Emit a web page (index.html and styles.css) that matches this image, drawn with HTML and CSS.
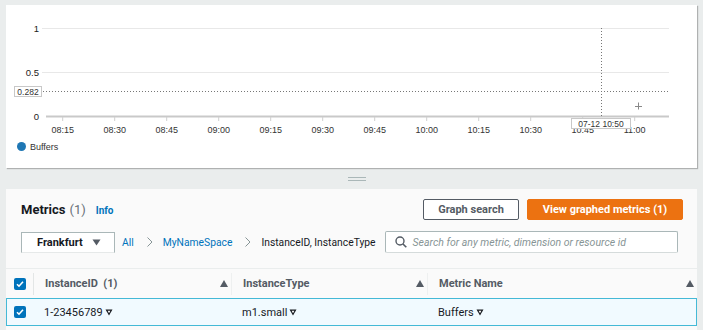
FILE: index.html
```html
<!DOCTYPE html>
<html lang="en">

<head>
    <meta charset="UTF-8">
    <meta name="viewport" content="width=device-width, initial-scale=1.0">
    <title>Metrics</title>
    <link rel="stylesheet" href="styles.css">
</head>

<body>
    <div class="graph-panel">
        <svg class="chart" width="691" height="163" viewBox="6 5 691 163">
            <!-- grid -->
            <line class="grid" x1="42" y1="28.5" x2="669" y2="28.5" />
            <line class="grid" x1="42" y1="72.5" x2="669" y2="72.5" />
            <line class="axis" x1="46" y1="116.5" x2="669" y2="116.5" />
            <text class="ylab" x="39" y="31.5">1</text>
            <text class="ylab" x="39" y="75.5">0.5</text>
            <text class="ylab" x="39" y="119.5">0</text>

            <g class="ticks">
                <line x1="62.7" y1="117" x2="62.7" y2="121" />
                <line x1="114.7" y1="117" x2="114.7" y2="121" />
                <line x1="166.7" y1="117" x2="166.7" y2="121" />
                <line x1="218.7" y1="117" x2="218.7" y2="121" />
                <line x1="270.7" y1="117" x2="270.7" y2="121" />
                <line x1="322.7" y1="117" x2="322.7" y2="121" />
                <line x1="374.7" y1="117" x2="374.7" y2="121" />
                <line x1="426.7" y1="117" x2="426.7" y2="121" />
                <line x1="478.7" y1="117" x2="478.7" y2="121" />
                <line x1="530.7" y1="117" x2="530.7" y2="121" />
                <line x1="582.7" y1="117" x2="582.7" y2="121" />
                <line x1="634.7" y1="117" x2="634.7" y2="121" />
            </g>
            <g class="xlab">
                <text x="62.7" y="132.5">08:15</text>
                <text x="114.7" y="132.5">08:30</text>
                <text x="166.7" y="132.5">08:45</text>
                <text x="218.7" y="132.5">09:00</text>
                <text x="270.7" y="132.5">09:15</text>
                <text x="322.7" y="132.5">09:30</text>
                <text x="374.7" y="132.5">09:45</text>
                <text x="426.7" y="132.5">10:00</text>
                <text x="478.7" y="132.5">10:15</text>
                <text x="530.7" y="132.5">10:30</text>
                <text x="582.7" y="132.5">10:45</text>
                <text x="634.7" y="132.5">11:00</text>
            </g>

            <!-- hover guides -->
            <line class="guide" x1="43" y1="91.5" x2="669" y2="91.5" />
            <line class="guide" x1="601.5" y1="28" x2="601.5" y2="116" />
            <rect class="tip" x="14.5" y="86.5" width="27" height="10" />
            <text class="tiptext" x="28" y="94.5">0.282</text>
            <rect class="tip" x="571.5" y="118.5" width="59" height="10" />
            <text class="tiptext" x="601" y="126.5">07-12 10:50</text>
            <g class="cross">
                <line x1="638.5" y1="102.5" x2="638.5" y2="109.5" />
                <line x1="635" y1="106.5" x2="642" y2="106.5" />
            </g>

            <!-- legend -->
            <circle cx="21.5" cy="146.5" r="4.5" fill="#1f77b4" />
            <text class="legend" x="30" y="150">Buffers</text>
        </svg>
    </div>

    <div class="splitter"><span class="handle"></span></div>

    <div class="metrics-panel">
        <div class="panel-header">
            <h2 class="title">Metrics <span class="count">(1)</span><a class="info" href="#">Info</a></h2>
            <div class="actions">
                <button class="btn">Graph search</button>
                <button class="btn btn-primary">View graphed metrics (1)</button>
            </div>
        </div>

        <div class="filter-bar">
            <div class="region-select">
                Frankfurt
                <svg width="9" height="7" viewBox="0 0 9 7"><path d="M0.5 0.5h8l-4 6z" fill="#545b64" /></svg>
            </div>
            <nav class="crumbs">
                <a href="#">All</a>
                <svg class="chev" width="6" height="10" viewBox="0 0 6 10"><path d="M0.5 0.5l4.5 4.5-4.5 4.5" fill="none" stroke="#879596" stroke-width="1" /></svg>
                <a href="#">MyNameSpace</a>
                <svg class="chev" width="6" height="10" viewBox="0 0 6 10"><path d="M0.5 0.5l4.5 4.5-4.5 4.5" fill="none" stroke="#879596" stroke-width="1" /></svg>
                <span class="current">InstanceID, InstanceType</span>
            </nav>
            <div class="search">
                <svg width="12" height="12" viewBox="0 0 12 12"><circle cx="5" cy="5" r="4" fill="none" stroke="#545b64" stroke-width="1.4" /><path d="M8 8l3.3 3.3" stroke="#545b64" stroke-width="1.6" /></svg>
                <span class="placeholder">Search for any metric, dimension or resource id</span>
            </div>
        </div>

        <div class="table">
            <div class="row head">
                <div class="cell check-cell"><span class="checkbox"><svg width="12" height="12" viewBox="0 0 12 12"><path d="M3 6.2l2 2 4-4.5" fill="none" stroke="#fff" stroke-width="1.6" /></svg></span></div>
                <div class="cell">InstanceID&nbsp;&nbsp;(1)<span class="sort"></span></div>
                <div class="cell">InstanceType<span class="sort"></span></div>
                <div class="cell last">Metric Name<span class="sort"></span></div>
            </div>
            <div class="row selected">
                <div class="cell check-cell"><span class="checkbox"><svg width="12" height="12" viewBox="0 0 12 12"><path d="M3 6.2l2 2 4-4.5" fill="none" stroke="#fff" stroke-width="1.6" /></svg></span></div>
                <div class="cell">1-23456789<svg class="caret" width="8" height="7" viewBox="0 0 8 7"><path d="M0.5 0.5h7l-3.5 6z" fill="#16191f" /><path d="M2.6 1.8h2.8l-1.4 2.4z" fill="#fff" /></svg></div>
                <div class="cell">m1.small<svg class="caret" width="8" height="7" viewBox="0 0 8 7"><path d="M0.5 0.5h7l-3.5 6z" fill="#16191f" /><path d="M2.6 1.8h2.8l-1.4 2.4z" fill="#fff" /></svg></div>
                <div class="cell">Buffers<svg class="caret" width="8" height="7" viewBox="0 0 8 7"><path d="M0.5 0.5h7l-3.5 6z" fill="#16191f" /><path d="M2.6 1.8h2.8l-1.4 2.4z" fill="#fff" /></svg></div>
            </div>
        </div>
    </div>
</body>

</html>
```

FILE: styles.css
```css
body {
    font-family: Roboto, "Liberation Sans", sans-serif;
    background-color: #eaeded;
    margin: 0;
    padding: 5px 6px 0 6px;
    color: #16191f;
}

/* graph */

.graph-panel {
    width: 691px;
    height: 163px;
    background-color: #fff;
    box-shadow: 1px 1px 1px rgba(0, 0, 0, 0.25);
}

.chart {
    display: block;
    font-family: "Liberation Sans", Arial, sans-serif;
}

.chart .grid {
    stroke: #e8e8e8;
    stroke-width: 1;
}

.chart .axis {
    stroke: #c9c9c9;
    stroke-width: 2;
}

.chart .ticks line {
    stroke: #cfcfcf;
    stroke-width: 1;
}

.chart .ylab {
    font-size: 9.5px;
    fill: #222;
    text-anchor: end;
}

.chart .xlab text {
    font-size: 9px;
    fill: #333;
    text-anchor: middle;
}

.chart .guide {
    stroke: #777;
    stroke-width: 1;
    stroke-dasharray: 1 2;
}

.chart .tip {
    fill: #fff;
    stroke: #c8c8c8;
    stroke-width: 1;
}

.chart .tiptext {
    font-size: 8.5px;
    fill: #333;
    text-anchor: middle;
}

.chart .cross line {
    stroke: #888;
    stroke-width: 1;
}

.chart .legend {
    font-size: 9px;
    fill: #333;
}

/* splitter */

.splitter {
    height: 21px;
    display: flex;
    align-items: center;
    justify-content: center;
}

.handle {
    width: 18px;
    height: 2px;
    border-top: 1px solid #aab7b8;
    border-bottom: 1px solid #aab7b8;
    margin-left: 10px;
}

/* metrics panel */

.metrics-panel {
    width: 691px;
    height: 141px;
    background-color: #fafafa;
}

.panel-header {
    display: flex;
    justify-content: space-between;
    align-items: center;
    height: 21px;
    padding: 10px 14px 0 15px;
}

.title {
    margin: 0;
    font-size: 13px;
    font-weight: 700;
    color: #16191f;
    display: flex;
    align-items: baseline;
}

.title .count {
    font-weight: 400;
    color: #687078;
    margin-left: 4px;
}

.info {
    font-size: 10px;
    font-weight: 700;
    color: #0073bb;
    text-decoration: none;
    margin-left: 10px;
}

.actions {
    display: flex;
    gap: 8px;
}

.btn {
    height: 21px;
    padding: 0 14px;
    font-family: inherit;
    font-size: 11px;
    font-weight: 700;
    color: #545b64;
    background-color: #fff;
    border: 1px solid #545b64;
    border-radius: 2px;
}

.btn-primary {
    width: 156px;
    color: #fff;
    background-color: #ec7211;
    border-color: #ec7211;
}

.btn:first-child {
    width: 96px;
}

/* filter bar */

.filter-bar {
    display: flex;
    align-items: center;
    height: 22px;
    margin-top: 11px;
    padding-left: 15px;
}

.region-select {
    box-sizing: border-box;
    width: 94px;
    height: 21px;
    display: flex;
    align-items: center;
    gap: 9px;
    padding-left: 15px;
    font-size: 11px;
    font-weight: 700;
    color: #16191f;
    background-color: #fff;
    border: 1px solid #aab7b8;
    border-bottom-color: #e6e9e9;
}

.crumbs {
    display: flex;
    align-items: center;
    gap: 10px;
    margin-left: 7px;
    font-size: 10.3px;
}

.crumbs a {
    color: #0073bb;
    text-decoration: none;
}

.crumbs .chev {
    margin-left: 3px;
}

.crumbs .current {
    color: #16191f;
}

.search {
    box-sizing: border-box;
    width: 293px;
    height: 22px;
    margin-left: 9px;
    display: flex;
    align-items: center;
    gap: 6px;
    padding-left: 9px;
    background-color: #fff;
    border: 1px solid #aab7b8;
    border-bottom-color: #d5dbdb;
    border-radius: 2px;
}

.placeholder {
    font-size: 10.5px;
    font-style: italic;
    color: #879596;
}

/* table */

.table {
    margin-top: 15px;
}

.row {
    display: grid;
    grid-template-columns: 27px 198px 196px 1fr;
    align-items: center;
}

.row.head {
    height: 30px;
    border-top: 1px solid #eaeded;
    box-sizing: border-box;
}

.cell {
    display: flex;
    align-items: center;
    padding-left: 11px;
    font-size: 11px;
}

.head .cell {
    height: 22px;
    font-weight: 700;
    color: #545b64;
    justify-content: space-between;
    padding-right: 3px;
    border-left: 1px solid #eef0f0;
}

.head .cell:nth-child(2) {
    border-left: 1px solid #e3e6e6;
}

.head .check-cell {
    border-left: none;
}

.cell.check-cell {
    padding-left: 8px;
}

.sort {
    width: 0;
    height: 0;
    border-left: 4.5px solid transparent;
    border-right: 4.5px solid transparent;
    border-bottom: 7px solid #545b64;
}

.row.selected {
    height: 28px;
    box-sizing: border-box;
    background-color: #f1faff;
    border: 1px solid #44b9d6;
}

.selected .cell.check-cell {
    padding-left: 7px;
}

.selected .cell {
    padding-left: 10px;
}

.checkbox {
    display: block;
    width: 12px;
    height: 12px;
    background-color: #0073bb;
    border-radius: 2px;
}

.checkbox svg {
    display: block;
}

.caret {
    margin-left: 2px;
}
```
